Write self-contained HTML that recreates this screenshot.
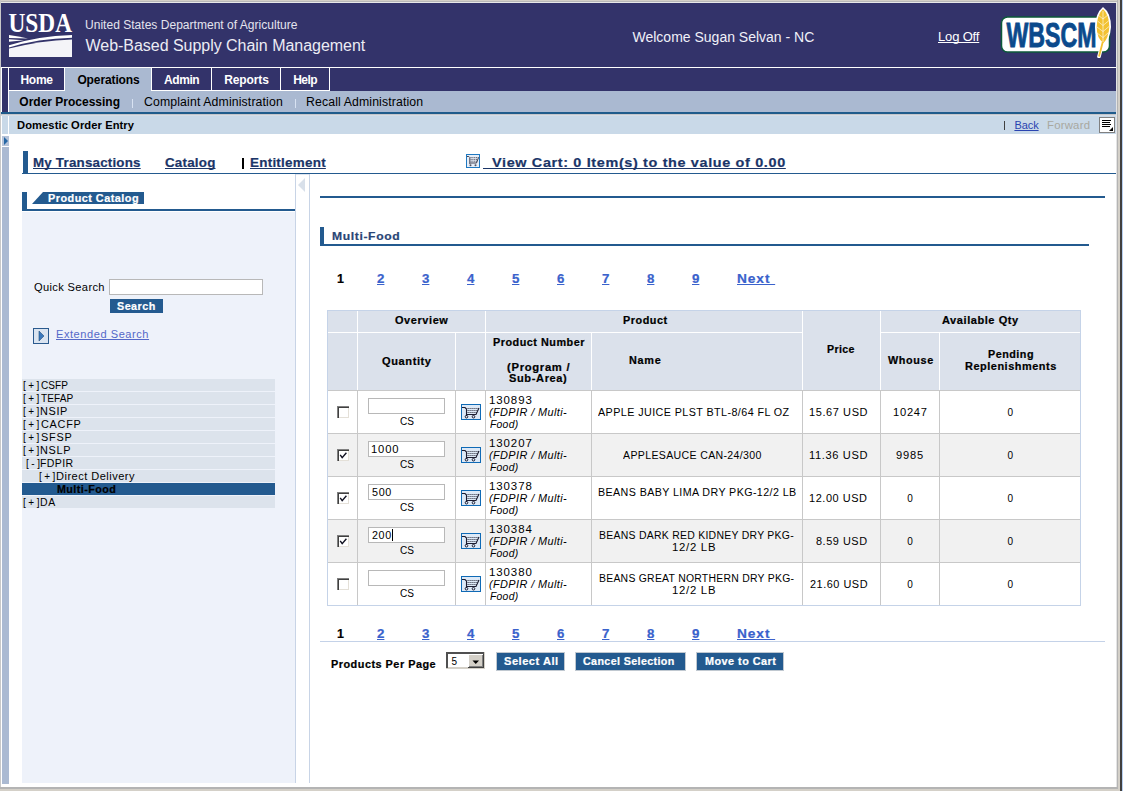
<!DOCTYPE html>
<html><head><meta charset="utf-8"><style>
html,body{margin:0;padding:0;}
body{width:1123px;height:791px;position:relative;overflow:hidden;font-family:"Liberation Sans",sans-serif;}
body>div{position:absolute;box-sizing:content-box;}
.t{white-space:pre;line-height:normal;text-decoration-skip-ink:none;}
</style></head><body>
<div style='left:0px;top:0px;width:1123px;height:791px;background:#d4d0c8;'></div>
<div style='left:0px;top:1px;width:1117px;height:1px;background:#b8b8b8;'></div>
<div style='left:0px;top:2px;width:1117px;height:1px;background:#e8e8e8;'></div>
<div style='left:0px;top:0px;width:1px;height:789px;background:#c8c8c8;'></div>
<div style='left:1px;top:3px;width:1115px;height:784px;background:#ffffff;'></div>
<div style='left:1116px;top:3px;width:1px;height:784px;background:#e4e4e4;'></div>
<div style='left:1117px;top:0px;width:1px;height:789px;background:#b4b4b4;'></div>
<div style='left:1120px;top:0px;width:2px;height:791px;background:#404040;'></div>
<div style='left:1122px;top:0px;width:1px;height:791px;background:#b8d0f0;'></div>
<div style='left:0px;top:787px;width:1118px;height:2px;background:#b4b4b4;'></div>
<div style='left:1px;top:3px;width:1115px;height:64px;background:#33336a;'></div>
<div style='left:1px;top:67px;width:1115px;height:1px;background:#fff;'></div>
<div style='left:2px;top:68px;width:6px;height:44px;background:#33336a;'></div>
<div style='left:9px;top:68px;width:1107px;height:23px;background:#33336a;'></div>
<div style='left:64px;top:68px;width:1px;height:23px;background:#fff;'></div>
<div style='left:9px;top:90px;width:56px;height:1px;background:#fff;'></div>
<div style='left:65px;top:68px;width:86px;height:23px;background:#aab9d1;'></div>
<div style='left:151px;top:68px;width:1px;height:23px;background:#fff;'></div>
<div style='left:211px;top:68px;width:1px;height:23px;background:#fff;'></div>
<div style='left:152px;top:90px;width:60px;height:1px;background:#fff;'></div>
<div style='left:280px;top:68px;width:1px;height:23px;background:#fff;'></div>
<div style='left:212px;top:90px;width:69px;height:1px;background:#fff;'></div>
<div style='left:329px;top:68px;width:1px;height:23px;background:#fff;'></div>
<div style='left:281px;top:90px;width:49px;height:1px;background:#fff;'></div>
<div style='left:64px;top:68px;width:1px;height:23px;background:#fff;'></div>
<div style='left:9px;top:91px;width:1107px;height:21px;background:#aab9d1;'></div>
<div style='left:1px;top:112px;width:1115px;height:2px;background:#1f5b8b;'></div>
<div style='left:132px;top:99px;width:1px;height:9px;background:#d8e2f2;'></div>
<div style='left:295px;top:99px;width:1px;height:9px;background:#d8e2f2;'></div>
<div style='left:1px;top:114px;width:1115px;height:1px;background:#c4c6ca;'></div>
<div style='left:1px;top:115px;width:1115px;height:1px;background:#d6dde6;'></div>
<div style='left:2px;top:116px;width:6px;height:18px;background:#c9d9e8;'></div>
<div style='left:9px;top:116px;width:1107px;height:18px;background:#c9d9e8;'></div>
<div style='left:1099px;top:117px;width:14px;height:14px;border:1px solid #808080;background:#fff'></div>
<div style='left:1102px;top:120px;width:9px;height:1px;background:#000;'></div>
<div style='left:1102px;top:122px;width:8px;height:1px;background:#000;'></div>
<div style='left:1102px;top:124px;width:9px;height:1px;background:#000;'></div>
<div style='left:1102px;top:126px;width:8px;height:1px;background:#000;'></div>
<svg style='position:absolute;left:1109px;top:127px' width='5' height='5'><path d='M4 0 L4 4 L0 4 Z' fill='#000'/></svg>
<div style='left:1004px;top:121px;width:1px;height:9px;background:#404040'></div>
<div style='left:2px;top:136px;width:7px;height:10px;background:#b4c2d8;'></div>
<svg style='position:absolute;left:2px;top:136px' width='7' height='10'><path d='M2 1 L6 5 L2 9 Z' fill='#2566a4'/></svg>
<div style='left:2px;top:147px;width:7px;height:637px;background:#abbad2;'></div>
<div style='left:23px;top:151px;width:5px;height:22px;background:#235a8f;'></div>
<div style='left:22px;top:173px;width:1094px;height:1px;background:#235a8f;'></div>
<div style='left:242px;top:158px;width:2px;height:11px;background:#000;'></div>
<div style='left:466px;top:154px;width:12px;height:12px;border:1px solid #1f78c0;background:#e6eef8'></div>
<svg style='position:absolute;left:466px;top:154px' width='14' height='14' viewBox='0 0 14 14'>
<path d='M1 2.5 L2.8 2.5 L3.8 3.5 L3.8 10' stroke='#404050' stroke-width='1' fill='none'/>
<path d='M4.5 3.6 L12.5 3.6 M4.5 5.4 L11.5 5.4 M4.5 7.2 L11 7.2' stroke='#505060' stroke-width='0.9' stroke-dasharray='1.2 0.6' fill='none'/>
<path d='M4.2 9 L10.5 9 L12.6 3.4' stroke='#404050' stroke-width='1' fill='none'/>
<circle cx='4.5' cy='11.2' r='1' fill='#505060'/><circle cx='9.5' cy='11.2' r='1' fill='#505060'/></svg>
<div style='left:483px;top:168px;width:9px;height:1px;background:#1b3568;'></div>
<div style='left:22px;top:192px;width:5px;height:19px;background:#235a8f;'></div>
<div style='left:22px;top:209px;width:273px;height:2px;background:#235a8f;'></div>
<svg style='position:absolute;left:32px;top:192px' width='112' height='12'><path d='M11 0 L112 0 L112 12 L0 12 Z' fill='#235a8f'/></svg>
<div style='left:22px;top:212px;width:273px;height:571px;background:#eef2fa;'></div>
<div style='left:109px;top:279px;width:152px;height:14px;border:1px solid #b8b8b8;background:#fff'></div>
<div style='left:110px;top:299px;width:53px;height:14px;background:#235a8f;'></div>
<div style='left:33px;top:328px;width:14px;height:14px;border:1px solid #2a5a8e;background:#dae4f0'></div>
<svg style='position:absolute;left:33px;top:328px' width='16' height='16'><path d='M6 3 L11 8 L6 13 Z' fill='#3a78bc' stroke='#23507e' stroke-width='0.6'/></svg>
<div style='left:22px;top:379px;width:253px;height:12px;background:#dce3ec;'></div>
<div style='left:22px;top:392px;width:253px;height:12px;background:#dce3ec;'></div>
<div style='left:22px;top:405px;width:253px;height:12px;background:#dce3ec;'></div>
<div style='left:22px;top:418px;width:253px;height:12px;background:#dce3ec;'></div>
<div style='left:22px;top:431px;width:253px;height:12px;background:#dce3ec;'></div>
<div style='left:22px;top:444px;width:253px;height:12px;background:#dce3ec;'></div>
<div style='left:22px;top:457px;width:253px;height:12px;background:#dce3ec;'></div>
<div style='left:22px;top:470px;width:253px;height:12px;background:#dce3ec;'></div>
<div style='left:22px;top:483px;width:253px;height:12px;background:#235a8f;'></div>
<div style='left:22px;top:496px;width:253px;height:12px;background:#dce3ec;'></div>
<div style='left:295px;top:174px;width:1px;height:609px;background:#c8d4e6;'></div>
<div style='left:309px;top:174px;width:1px;height:609px;background:#c8d4e6;'></div>
<div style='left:296px;top:174px;width:13px;height:1px;background:#dfe6f0;'></div>
<svg style='position:absolute;left:298px;top:178px' width='8' height='15'><path d='M7 0 L7 14 L0 7 Z' fill='#d8e0ea'/></svg>
<div style='left:320px;top:196px;width:785px;height:2px;background:#235a8f;'></div>
<div style='left:320px;top:227px;width:4px;height:19px;background:#235a8f;'></div>
<div style='left:320px;top:244px;width:769px;height:2px;background:#235a8f;'></div>
<div style='left:320px;top:641px;width:785px;height:1px;background:#c4d2e8;'></div>
<div style='left:327px;top:310px;width:754px;height:296px;background:#c5d3e8;'></div>
<div style='left:328px;top:311px;width:752px;height:79px;background:#dbe1eb;'></div>
<div style='left:328px;top:332px;width:474px;height:1px;background:#fff;'></div>
<div style='left:881px;top:332px;width:199px;height:1px;background:#fff;'></div>
<div style='left:357px;top:311px;width:1px;height:79px;background:#fff;'></div>
<div style='left:485px;top:311px;width:1px;height:79px;background:#fff;'></div>
<div style='left:802px;top:311px;width:1px;height:79px;background:#fff;'></div>
<div style='left:880px;top:311px;width:1px;height:79px;background:#fff;'></div>
<div style='left:455px;top:333px;width:1px;height:57px;background:#fff;'></div>
<div style='left:591px;top:333px;width:1px;height:57px;background:#fff;'></div>
<div style='left:939px;top:333px;width:1px;height:57px;background:#fff;'></div>
<div style='left:328px;top:390px;width:752px;height:1px;background:#c8c8c8;'></div>
<div style='left:328px;top:391px;width:752px;height:42px;background:#ffffff;'></div>
<div style='left:328px;top:433px;width:752px;height:1px;background:#c8c8c8;'></div>
<div style='left:328px;top:434px;width:752px;height:42px;background:#f1f1f1;'></div>
<div style='left:328px;top:476px;width:752px;height:1px;background:#c8c8c8;'></div>
<div style='left:328px;top:477px;width:752px;height:42px;background:#ffffff;'></div>
<div style='left:328px;top:519px;width:752px;height:1px;background:#c8c8c8;'></div>
<div style='left:328px;top:520px;width:752px;height:42px;background:#f1f1f1;'></div>
<div style='left:328px;top:562px;width:752px;height:1px;background:#c8c8c8;'></div>
<div style='left:328px;top:563px;width:752px;height:42px;background:#ffffff;'></div>
<div style='left:357px;top:390px;width:1px;height:215px;background:#c8c8c8;'></div>
<div style='left:455px;top:390px;width:1px;height:215px;background:#c8c8c8;'></div>
<div style='left:485px;top:390px;width:1px;height:215px;background:#c8c8c8;'></div>
<div style='left:591px;top:390px;width:1px;height:215px;background:#c8c8c8;'></div>
<div style='left:802px;top:390px;width:1px;height:215px;background:#c8c8c8;'></div>
<div style='left:880px;top:390px;width:1px;height:215px;background:#c8c8c8;'></div>
<div style='left:939px;top:390px;width:1px;height:215px;background:#c8c8c8;'></div>
<div style='left:328px;top:605px;width:752px;height:1px;background:#c5d3e8;'></div>
<div style='left:337px;top:406px;width:12px;height:12px;background:#fff;box-shadow:inset 1px 1px 0 #808080, inset 2px 2px 0 #404040, inset -1px -1px 0 #e4e0d8'></div>
<div style='left:368px;top:398px;width:75px;height:14px;border:1px solid #b8b8b8;background:#fff'></div>
<svg style='position:absolute;left:461px;top:404px' width='20' height='16' viewBox='0 0 20 16'>
<rect x='0.5' y='0.5' width='19' height='15' fill='#dde9f7' stroke='#0f6ab6' stroke-width='1'/>
<path d='M1 3.5 L4 3.5 L5.5 5 L5.5 12' stroke='#1c1c30' stroke-width='1.1' fill='none'/>
<path d='M6.5 4.5 L18 4.5 M6.5 6.5 L17 6.5 M6.5 8.5 L16 8.5' stroke='#303040' stroke-width='0.9' stroke-dasharray='1.2 0.8' fill='none'/>
<path d='M6 10.5 L15 10.5 L18 4' stroke='#1c1c30' stroke-width='1.1' fill='none'/>
<circle cx='5.5' cy='12.7' r='1.3' fill='none' stroke='#1c1c30' stroke-width='1'/><circle cx='12.5' cy='12.7' r='1.3' fill='none' stroke='#1c1c30' stroke-width='1'/></svg>
<div style='left:337px;top:449px;width:12px;height:12px;background:#fff;box-shadow:inset 1px 1px 0 #808080, inset 2px 2px 0 #404040, inset -1px -1px 0 #e4e0d8'></div>
<svg style='position:absolute;left:337px;top:449px' width='12' height='12'><path d='M3.2 5.8 L5.2 8.6 L9.4 3.8' stroke='#101020' stroke-width='1.4' fill='none'/></svg>
<div style='left:368px;top:441px;width:75px;height:14px;border:1px solid #b8b8b8;background:#fff'></div>
<svg style='position:absolute;left:461px;top:447px' width='20' height='16' viewBox='0 0 20 16'>
<rect x='0.5' y='0.5' width='19' height='15' fill='#dde9f7' stroke='#0f6ab6' stroke-width='1'/>
<path d='M1 3.5 L4 3.5 L5.5 5 L5.5 12' stroke='#1c1c30' stroke-width='1.1' fill='none'/>
<path d='M6.5 4.5 L18 4.5 M6.5 6.5 L17 6.5 M6.5 8.5 L16 8.5' stroke='#303040' stroke-width='0.9' stroke-dasharray='1.2 0.8' fill='none'/>
<path d='M6 10.5 L15 10.5 L18 4' stroke='#1c1c30' stroke-width='1.1' fill='none'/>
<circle cx='5.5' cy='12.7' r='1.3' fill='none' stroke='#1c1c30' stroke-width='1'/><circle cx='12.5' cy='12.7' r='1.3' fill='none' stroke='#1c1c30' stroke-width='1'/></svg>
<div style='left:337px;top:492px;width:12px;height:12px;background:#fff;box-shadow:inset 1px 1px 0 #808080, inset 2px 2px 0 #404040, inset -1px -1px 0 #e4e0d8'></div>
<svg style='position:absolute;left:337px;top:492px' width='12' height='12'><path d='M3.2 5.8 L5.2 8.6 L9.4 3.8' stroke='#101020' stroke-width='1.4' fill='none'/></svg>
<div style='left:368px;top:484px;width:75px;height:14px;border:1px solid #b8b8b8;background:#fff'></div>
<svg style='position:absolute;left:461px;top:490px' width='20' height='16' viewBox='0 0 20 16'>
<rect x='0.5' y='0.5' width='19' height='15' fill='#dde9f7' stroke='#0f6ab6' stroke-width='1'/>
<path d='M1 3.5 L4 3.5 L5.5 5 L5.5 12' stroke='#1c1c30' stroke-width='1.1' fill='none'/>
<path d='M6.5 4.5 L18 4.5 M6.5 6.5 L17 6.5 M6.5 8.5 L16 8.5' stroke='#303040' stroke-width='0.9' stroke-dasharray='1.2 0.8' fill='none'/>
<path d='M6 10.5 L15 10.5 L18 4' stroke='#1c1c30' stroke-width='1.1' fill='none'/>
<circle cx='5.5' cy='12.7' r='1.3' fill='none' stroke='#1c1c30' stroke-width='1'/><circle cx='12.5' cy='12.7' r='1.3' fill='none' stroke='#1c1c30' stroke-width='1'/></svg>
<div style='left:337px;top:535px;width:12px;height:12px;background:#fff;box-shadow:inset 1px 1px 0 #808080, inset 2px 2px 0 #404040, inset -1px -1px 0 #e4e0d8'></div>
<svg style='position:absolute;left:337px;top:535px' width='12' height='12'><path d='M3.2 5.8 L5.2 8.6 L9.4 3.8' stroke='#101020' stroke-width='1.4' fill='none'/></svg>
<div style='left:368px;top:527px;width:75px;height:14px;border:1px solid #b8b8b8;background:#fff'></div>
<svg style='position:absolute;left:461px;top:533px' width='20' height='16' viewBox='0 0 20 16'>
<rect x='0.5' y='0.5' width='19' height='15' fill='#dde9f7' stroke='#0f6ab6' stroke-width='1'/>
<path d='M1 3.5 L4 3.5 L5.5 5 L5.5 12' stroke='#1c1c30' stroke-width='1.1' fill='none'/>
<path d='M6.5 4.5 L18 4.5 M6.5 6.5 L17 6.5 M6.5 8.5 L16 8.5' stroke='#303040' stroke-width='0.9' stroke-dasharray='1.2 0.8' fill='none'/>
<path d='M6 10.5 L15 10.5 L18 4' stroke='#1c1c30' stroke-width='1.1' fill='none'/>
<circle cx='5.5' cy='12.7' r='1.3' fill='none' stroke='#1c1c30' stroke-width='1'/><circle cx='12.5' cy='12.7' r='1.3' fill='none' stroke='#1c1c30' stroke-width='1'/></svg>
<div style='left:337px;top:578px;width:12px;height:12px;background:#fff;box-shadow:inset 1px 1px 0 #808080, inset 2px 2px 0 #404040, inset -1px -1px 0 #e4e0d8'></div>
<div style='left:368px;top:570px;width:75px;height:14px;border:1px solid #b8b8b8;background:#fff'></div>
<svg style='position:absolute;left:461px;top:576px' width='20' height='16' viewBox='0 0 20 16'>
<rect x='0.5' y='0.5' width='19' height='15' fill='#dde9f7' stroke='#0f6ab6' stroke-width='1'/>
<path d='M1 3.5 L4 3.5 L5.5 5 L5.5 12' stroke='#1c1c30' stroke-width='1.1' fill='none'/>
<path d='M6.5 4.5 L18 4.5 M6.5 6.5 L17 6.5 M6.5 8.5 L16 8.5' stroke='#303040' stroke-width='0.9' stroke-dasharray='1.2 0.8' fill='none'/>
<path d='M6 10.5 L15 10.5 L18 4' stroke='#1c1c30' stroke-width='1.1' fill='none'/>
<circle cx='5.5' cy='12.7' r='1.3' fill='none' stroke='#1c1c30' stroke-width='1'/><circle cx='12.5' cy='12.7' r='1.3' fill='none' stroke='#1c1c30' stroke-width='1'/></svg>
<div style='left:392px;top:529px;width:1px;height:12px;background:#000;'></div>
<div style='left:446px;top:652px;width:39px;height:17px;background:#d4d0c8;'></div>
<div style='left:446px;top:652px;width:38px;height:2px;background:#505050;'></div>
<div style='left:446px;top:652px;width:2px;height:16px;background:#505050;'></div>
<div style='left:448px;top:654px;width:20px;height:13px;background:#fff;'></div>
<div style='left:468px;top:654px;width:16px;height:14px;background:#404040;'></div>
<div style='left:468px;top:654px;width:15px;height:13px;background:#fff;'></div>
<div style='left:469px;top:655px;width:14px;height:12px;background:#808080;'></div>
<div style='left:469px;top:655px;width:13px;height:11px;background:#d4d0c8;'></div>
<svg style='position:absolute;left:472px;top:660px' width='8' height='5'><path d='M0.5 0.5 L7 0.5 L3.75 4 Z' fill='#000'/></svg>
<div style='left:496px;top:652px;width:67px;height:17px;border:1px solid #c0c8d0;background:#235a8f'></div>
<div style='left:575px;top:652px;width:109px;height:17px;border:1px solid #c0c8d0;background:#235a8f'></div>
<div style='left:696px;top:652px;width:86px;height:17px;border:1px solid #c0c8d0;background:#235a8f'></div>
<svg style='position:absolute;left:8px;top:12px' width='66' height='47' viewBox='0 0 66 47'>
<text x='0.5' y='20' font-family='Liberation Serif' font-weight='700' font-size='27' fill='#fff' textLength='63.5' lengthAdjust='spacingAndGlyphs'>USDA</text>
<path d='M1 23 L1 26 L20 26.5 Q10 24 1 23 Z' fill='#fff'/>
<path d='M1 27.2 L1 29.8 L16 28.2 Z' fill='#fff'/>
<path d='M1 33.2 Q30 24 64 23 L64 25.8 Q30 26.5 1 35.6 Z' fill='#fff'/>
<path d='M1 36.6 Q32 28.5 64 27.4 L64 45 L1 45 Z' fill='#f4f4f8'/>
</svg>
<svg style='position:absolute;left:1000px;top:6px' width='116' height='52' viewBox='0 0 116 52'>
<rect x='1.5' y='11' width='108' height='35' rx='6' fill='#fff' stroke='#0c5a3a' stroke-width='1.5'/>
<text x='6.5' y='41' font-family='Liberation Sans' font-weight='700' font-size='35' fill='#0b4a8c' stroke='#0b4a8c' stroke-width='0.9' textLength='90' lengthAdjust='spacingAndGlyphs'>WBSCM</text>
<path d='M99 50.5 Q101 43 103.5 33' stroke='#fff' stroke-width='3.6' fill='none' stroke-linecap='round'/>
<path d='M103 1 Q111 7 111 21 Q110 34 103.5 39 Q95 34 95 21 Q95.5 7 103 1 Z' fill='#fff'/>
<path d='M99 50.5 Q101 43 103.5 33' stroke='#f2c232' stroke-width='1.8' fill='none'/>
<path d='M103 3 Q109.3 8.5 109.3 21 Q108.5 32.5 103.5 37 Q96.7 32.5 96.7 21 Q97 8.5 103 3 Z' fill='#f2c232'/>
<path d='M98 9 L103 13 L108.5 8.5 M97.5 15 L103 19.5 L109 14.5 M97 21 L103 25.5 L109 20.5 M97 27 L103 31.5 L108.5 26.5 M103 5 L103 36' stroke='#fff' stroke-width='0.7' fill='none' opacity='0.85'/>
</svg>
<div class='t' style='left:84.5px;top:18.0px;font-size:12px;font-weight:400;color:#e4e4ee;letter-spacing:0.013126640830103762px;transform:scaleX(1.0024);transform-origin:0 0;'>United States Department of Agriculture</div>
<div class='t' style='left:85.5px;top:36.7px;font-size:16px;font-weight:400;color:#ececf4;letter-spacing:-0.03125px;'>Web-Based Supply Chain Management</div>
<div class='t' style='left:632.5px;top:29.0px;font-size:14px;font-weight:400;color:#f0f0f8;letter-spacing:0.0px;'>Welcome Sugan Selvan - NC</div>
<div class='t' style='left:938.0px;top:29.0px;font-size:13px;font-weight:400;color:#ffffff;letter-spacing:-0.16666666666666666px;text-decoration:underline;'>Log Off</div>
<div class='t' style='left:20.4px;top:72.8px;font-size:12px;font-weight:700;color:#fff;letter-spacing:-0.23333333333333428px;'>Home</div>
<div class='t' style='left:77.4px;top:72.8px;font-size:12px;font-weight:700;color:#000;letter-spacing:-0.1111111111111111px;'>Operations</div>
<div class='t' style='left:164.0px;top:72.6px;font-size:12px;font-weight:700;color:#fff;letter-spacing:-0.4250000000000007px;'>Admin</div>
<div class='t' style='left:224.2px;top:72.6px;font-size:12px;font-weight:700;color:#fff;letter-spacing:-0.10000000000000024px;'>Reports</div>
<div class='t' style='left:293.2px;top:72.6px;font-size:12px;font-weight:700;color:#fff;letter-spacing:-0.5px;'>Help</div>
<div class='t' style='left:19.3px;top:95.0px;font-size:12px;font-weight:700;color:#000;letter-spacing:0.0px;'>Order Processing</div>
<div class='t' style='left:144.4px;top:95.1px;font-size:12px;font-weight:400;color:#000;letter-spacing:0.12753623188405797px;transform:scaleX(1.0227);transform-origin:0 0;'>Complaint Administration</div>
<div class='t' style='left:306.18px;top:95.1px;font-size:12px;font-weight:400;color:#000;letter-spacing:0.1222466960352423px;transform:scaleX(1.0225);transform-origin:0 0;'>Recall Administration</div>
<div class='t' style='left:17.3px;top:118.9px;font-size:11px;font-weight:700;color:#000;letter-spacing:0.08560311284046723px;transform:scaleX(1.0145);transform-origin:0 0;'>Domestic Order Entry</div>
<div class='t' style='left:1014.4px;top:118.8px;font-size:11px;font-weight:400;color:#2a44b0;letter-spacing:-0.06666666666666643px;text-decoration:underline;'>Back</div>
<div class='t' style='left:1046.97px;top:118.8px;font-size:11px;font-weight:400;color:#a8a8a0;letter-spacing:0.2096774193548394px;transform:scaleX(1.0333);transform-origin:0 0;'>Forward</div>
<div class='t' style='left:33.37px;top:154.8px;font-size:13px;font-weight:700;color:#1b3568;letter-spacing:0.19460500963391217px;-webkit-text-stroke:0.2px #1b3568;text-decoration:underline;transform:scaleX(1.0277);transform-origin:0 0;'>My Transactions</div>
<div class='t' style='left:165.2px;top:154.8px;font-size:13px;font-weight:700;color:#1b3568;letter-spacing:0.21083505866114632px;-webkit-text-stroke:0.2px #1b3568;text-decoration:underline;transform:scaleX(1.0277);transform-origin:0 0;'>Catalog</div>
<div class='t' style='left:250.17px;top:154.8px;font-size:13px;font-weight:700;color:#1b3568;letter-spacing:0.2320441988950282px;-webkit-text-stroke:0.2px #1b3568;text-decoration:underline;transform:scaleX(1.0343);transform-origin:0 0;'>Entitlement</div>
<div class='t' style='left:491.5px;top:154.8px;font-size:13px;font-weight:700;color:#1b3568;letter-spacing:0.5877223366410788px;-webkit-text-stroke:0.2px #1b3568;text-decoration:underline;transform:scaleX(1.1081);transform-origin:0 0;'>View Cart: 0 Item(s) to the value of 0.00</div>
<div class='t' style='left:47.7px;top:193.0px;font-size:10px;font-weight:700;color:#fff;letter-spacing:0.43723849372384876px;-webkit-text-stroke:0.2px #fff;transform:scaleX(1.0864);transform-origin:0 0;'>Product Catalog</div>
<div class='t' style='left:33.5px;top:280.9px;font-size:10.5px;font-weight:400;color:#000;letter-spacing:0.32175689479060265px;transform:scaleX(1.0595);transform-origin:0 0;'>Quick Search</div>
<div class='t' style='left:117.4px;top:300.8px;font-size:10px;font-weight:700;color:#fff;letter-spacing:0.45613540197461133px;-webkit-text-stroke:0.2px #fff;transform:scaleX(1.0742);transform-origin:0 0;'>Search</div>
<div class='t' style='left:56.4px;top:328.5px;font-size:10px;font-weight:400;color:#5468c8;letter-spacing:0.5082204617088343px;text-decoration:underline;transform:scaleX(1.1033);transform-origin:0 0;'>Extended Search</div>
<div class='t' style='left:22.9px;top:379.8px;font-size:10px;font-weight:400;color:#000;letter-spacing:2.5500000000000007px;'>[+]</div>
<div class='t' style='left:40.8px;top:379.8px;font-size:10px;font-weight:400;color:#000;letter-spacing:0.049723756906076874px;transform:scaleX(1.0056);transform-origin:0 0;'>CSFP</div>
<div class='t' style='left:22.9px;top:392.8px;font-size:10px;font-weight:400;color:#000;letter-spacing:2.5500000000000007px;'>[+]</div>
<div class='t' style='left:40.6px;top:392.8px;font-size:10px;font-weight:400;color:#000;letter-spacing:0.07430340557275648px;transform:scaleX(1.0094);transform-origin:0 0;'>TEFAP</div>
<div class='t' style='left:22.9px;top:405.8px;font-size:10px;font-weight:400;color:#000;letter-spacing:2.5500000000000007px;'>[+]</div>
<div class='t' style='left:40.01px;top:405.8px;font-size:10px;font-weight:400;color:#000;letter-spacing:0.5916197623514704px;transform:scaleX(1.0878);transform-origin:0 0;'>NSIP</div>
<div class='t' style='left:22.9px;top:418.8px;font-size:10px;font-weight:400;color:#000;letter-spacing:2.5500000000000007px;'>[+]</div>
<div class='t' style='left:40.8px;top:418.8px;font-size:10px;font-weight:400;color:#000;letter-spacing:0.6857410881801138px;transform:scaleX(1.0878);transform-origin:0 0;'>CACFP</div>
<div class='t' style='left:22.9px;top:431.8px;font-size:10px;font-weight:400;color:#000;letter-spacing:2.5500000000000007px;'>[+]</div>
<div class='t' style='left:40.8px;top:431.8px;font-size:10px;font-weight:400;color:#000;letter-spacing:0.6991869918699205px;transform:scaleX(1.0878);transform-origin:0 0;'>SFSP</div>
<div class='t' style='left:22.9px;top:444.8px;font-size:10px;font-weight:400;color:#000;letter-spacing:2.5500000000000007px;'>[+]</div>
<div class='t' style='left:40.01px;top:444.8px;font-size:10px;font-weight:400;color:#000;letter-spacing:0.6722951844903082px;transform:scaleX(1.0878);transform-origin:0 0;'>NSLP</div>
<div class='t' style='left:25.9px;top:457.8px;font-size:10px;font-weight:400;color:#000;letter-spacing:2.5999999999999996px;'>[-]</div>
<div class='t' style='left:39.85px;top:457.8px;font-size:10px;font-weight:400;color:#000;letter-spacing:0.35655737704918034px;transform:scaleX(1.0517);transform-origin:0 0;'>FDPIR</div>
<div class='t' style='left:39.1px;top:470.8px;font-size:10px;font-weight:400;color:#000;letter-spacing:2.3499999999999996px;'>[+]</div>
<div class='t' style='left:55.8px;top:470.8px;font-size:10px;font-weight:400;color:#000;letter-spacing:0.4332188320872905px;transform:scaleX(1.1047);transform-origin:0 0;'>Direct Delivery</div>
<div class='t' style='left:56.5px;top:483.8px;font-size:10px;font-weight:700;color:#000;letter-spacing:0.39294403892944px;-webkit-text-stroke:0.2px #000;transform:scaleX(1.0745);transform-origin:0 0;'>Multi-Food</div>
<div class='t' style='left:23.1px;top:496.8px;font-size:10px;font-weight:400;color:#000;letter-spacing:2.5px;'>[+]</div>
<div class='t' style='left:39.85px;top:496.8px;font-size:10px;font-weight:400;color:#000;letter-spacing:0.5735294117647073px;transform:scaleX(1.0462);transform-origin:0 0;'>DA</div>
<div class='t' style='left:332.0px;top:230.0px;font-size:11px;font-weight:700;color:#2a4676;letter-spacing:0.5748244192328473px;-webkit-text-stroke:0.2px #2a4676;transform:scaleX(1.1018);transform-origin:0 0;'>Multi-Food</div>
<div class='t' style='left:337.0px;top:272.0px;font-size:12px;font-weight:700;color:#000;letter-spacing:0.0px;-webkit-text-stroke:0.2px #000;transform:scaleX(1.0357);transform-origin:0 0;'>1</div>
<div class='t' style='left:377.3px;top:272.0px;font-size:12px;font-weight:700;color:#3a62cc;letter-spacing:0.0px;-webkit-text-stroke:0.2px #3a62cc;text-decoration:underline;transform:scaleX(1.1071);transform-origin:0 0;'>2</div>
<div class='t' style='left:422.0px;top:272.0px;font-size:12px;font-weight:700;color:#3a62cc;letter-spacing:0.0px;-webkit-text-stroke:0.2px #3a62cc;text-decoration:underline;transform:scaleX(1.1071);transform-origin:0 0;'>3</div>
<div class='t' style='left:467.0px;top:272.0px;font-size:12px;font-weight:700;color:#3a62cc;letter-spacing:0.0px;-webkit-text-stroke:0.2px #3a62cc;text-decoration:underline;transform:scaleX(1.1071);transform-origin:0 0;'>4</div>
<div class='t' style='left:512.2px;top:272.0px;font-size:12px;font-weight:700;color:#3a62cc;letter-spacing:0.0px;-webkit-text-stroke:0.2px #3a62cc;text-decoration:underline;transform:scaleX(1.1071);transform-origin:0 0;'>5</div>
<div class='t' style='left:556.8px;top:272.0px;font-size:12px;font-weight:700;color:#3a62cc;letter-spacing:0.0px;-webkit-text-stroke:0.2px #3a62cc;text-decoration:underline;transform:scaleX(1.1071);transform-origin:0 0;'>6</div>
<div class='t' style='left:602.2px;top:272.0px;font-size:12px;font-weight:700;color:#3a62cc;letter-spacing:0.0px;-webkit-text-stroke:0.2px #3a62cc;text-decoration:underline;transform:scaleX(1.1071);transform-origin:0 0;'>7</div>
<div class='t' style='left:647.0px;top:272.0px;font-size:12px;font-weight:700;color:#3a62cc;letter-spacing:0.0px;-webkit-text-stroke:0.2px #3a62cc;text-decoration:underline;transform:scaleX(1.1071);transform-origin:0 0;'>8</div>
<div class='t' style='left:692.2px;top:272.0px;font-size:12px;font-weight:700;color:#3a62cc;letter-spacing:0.0px;-webkit-text-stroke:0.2px #3a62cc;text-decoration:underline;transform:scaleX(1.1071);transform-origin:0 0;'>9</div>
<div class='t' style='left:737.1px;top:272.0px;font-size:12px;font-weight:700;color:#3a62cc;letter-spacing:0.8097643097643097px;-webkit-text-stroke:0.2px #3a62cc;text-decoration:underline;transform:scaleX(1.1423);transform-origin:0 0;'>Next </div>
<div class='t' style='left:337.0px;top:627.0px;font-size:12px;font-weight:700;color:#000;letter-spacing:0.0px;-webkit-text-stroke:0.2px #000;transform:scaleX(1.0357);transform-origin:0 0;'>1</div>
<div class='t' style='left:377.3px;top:627.0px;font-size:12px;font-weight:700;color:#3a62cc;letter-spacing:0.0px;-webkit-text-stroke:0.2px #3a62cc;text-decoration:underline;transform:scaleX(1.1071);transform-origin:0 0;'>2</div>
<div class='t' style='left:422.0px;top:627.0px;font-size:12px;font-weight:700;color:#3a62cc;letter-spacing:0.0px;-webkit-text-stroke:0.2px #3a62cc;text-decoration:underline;transform:scaleX(1.1071);transform-origin:0 0;'>3</div>
<div class='t' style='left:467.0px;top:627.0px;font-size:12px;font-weight:700;color:#3a62cc;letter-spacing:0.0px;-webkit-text-stroke:0.2px #3a62cc;text-decoration:underline;transform:scaleX(1.1071);transform-origin:0 0;'>4</div>
<div class='t' style='left:512.2px;top:627.0px;font-size:12px;font-weight:700;color:#3a62cc;letter-spacing:0.0px;-webkit-text-stroke:0.2px #3a62cc;text-decoration:underline;transform:scaleX(1.1071);transform-origin:0 0;'>5</div>
<div class='t' style='left:556.8px;top:627.0px;font-size:12px;font-weight:700;color:#3a62cc;letter-spacing:0.0px;-webkit-text-stroke:0.2px #3a62cc;text-decoration:underline;transform:scaleX(1.1071);transform-origin:0 0;'>6</div>
<div class='t' style='left:602.2px;top:627.0px;font-size:12px;font-weight:700;color:#3a62cc;letter-spacing:0.0px;-webkit-text-stroke:0.2px #3a62cc;text-decoration:underline;transform:scaleX(1.1071);transform-origin:0 0;'>7</div>
<div class='t' style='left:647.0px;top:627.0px;font-size:12px;font-weight:700;color:#3a62cc;letter-spacing:0.0px;-webkit-text-stroke:0.2px #3a62cc;text-decoration:underline;transform:scaleX(1.1071);transform-origin:0 0;'>8</div>
<div class='t' style='left:692.2px;top:627.0px;font-size:12px;font-weight:700;color:#3a62cc;letter-spacing:0.0px;-webkit-text-stroke:0.2px #3a62cc;text-decoration:underline;transform:scaleX(1.1071);transform-origin:0 0;'>9</div>
<div class='t' style='left:737.1px;top:627.0px;font-size:12px;font-weight:700;color:#3a62cc;letter-spacing:0.8097643097643097px;-webkit-text-stroke:0.2px #3a62cc;text-decoration:underline;transform:scaleX(1.1423);transform-origin:0 0;'>Next </div>
<div class='t' style='left:395.4px;top:315.0px;font-size:10px;font-weight:700;color:#000;letter-spacing:0.5487804878048775px;-webkit-text-stroke:0.2px #000;transform:scaleX(1.0933);transform-origin:0 0;'>Overview</div>
<div class='t' style='left:622.7px;top:314.9px;font-size:10px;font-weight:700;color:#000;letter-spacing:0.4848116646415562px;-webkit-text-stroke:0.2px #000;transform:scaleX(1.0829);transform-origin:0 0;'>Product</div>
<div class='t' style='left:942.4px;top:315.0px;font-size:10px;font-weight:700;color:#000;letter-spacing:0.4978448275862064px;-webkit-text-stroke:0.2px #000;transform:scaleX(1.1048);transform-origin:0 0;'>Available Qty</div>
<div class='t' style='left:382.3px;top:355.7px;font-size:10px;font-weight:700;color:#000;letter-spacing:0.5501183898973965px;-webkit-text-stroke:0.2px #000;transform:scaleX(1.1037);transform-origin:0 0;'>Quantity</div>
<div class='t' style='left:492.7px;top:337.0px;font-size:10px;font-weight:700;color:#000;letter-spacing:0.46526997257564157px;-webkit-text-stroke:0.2px #000;transform:scaleX(1.0829);transform-origin:0 0;'>Product Number</div>
<div class='t' style='left:506.5px;top:361.5px;font-size:10px;font-weight:700;color:#000;letter-spacing:0.6172839506172839px;-webkit-text-stroke:0.2px #000;transform:scaleX(1.1250);transform-origin:0 0;'>(Program /</div>
<div class='t' style='left:509.0px;top:373.0px;font-size:10px;font-weight:700;color:#000;letter-spacing:0.5660377358490575px;-webkit-text-stroke:0.2px #000;transform:scaleX(1.1042);transform-origin:0 0;'>Sub-Area)</div>
<div class='t' style='left:628.5px;top:355.3px;font-size:10px;font-weight:700;color:#000;letter-spacing:0.6923076923076922px;-webkit-text-stroke:0.2px #000;transform:scaleX(1.0833);transform-origin:0 0;'>Name</div>
<div class='t' style='left:827.4px;top:344.0px;font-size:10px;font-weight:700;color:#000;letter-spacing:0.3648775894538608px;-webkit-text-stroke:0.2px #000;transform:scaleX(1.0620);transform-origin:0 0;'>Price</div>
<div class='t' style='left:887.6px;top:355.0px;font-size:10px;font-weight:700;color:#000;letter-spacing:0.5914691943127954px;-webkit-text-stroke:0.2px #000;transform:scaleX(1.0821);transform-origin:0 0;'>Whouse</div>
<div class='t' style='left:987.8px;top:349.3px;font-size:10px;font-weight:700;color:#000;letter-spacing:0.46428571428571325px;-webkit-text-stroke:0.2px #000;transform:scaleX(1.0769);transform-origin:0 0;'>Pending</div>
<div class='t' style='left:965.0px;top:361.0px;font-size:10px;font-weight:700;color:#000;letter-spacing:0.4935897435897436px;-webkit-text-stroke:0.2px #000;transform:scaleX(1.0909);transform-origin:0 0;'>Replenishments</div>
<div class='t' style='left:488.56px;top:394.9px;font-size:10px;font-weight:400;color:#000;letter-spacing:0.8043715846994538px;transform:scaleX(1.1438);transform-origin:0 0;'>130893</div>
<div class='t' style='left:489.4px;top:407.0px;font-size:10px;font-weight:400;color:#000;letter-spacing:0.3808197373656982px;font-style:italic;transform:scaleX(1.0879);transform-origin:0 0;'>(FDPIR / Multi-</div>
<div class='t' style='left:489.5px;top:418.6px;font-size:10px;font-weight:400;color:#000;letter-spacing:0.24074074074074162px;font-style:italic;transform:scaleX(1.0385);transform-origin:0 0;'>Food)</div>
<div class='t' style='left:598.0px;top:407.2px;font-size:10px;font-weight:400;color:#000;letter-spacing:0.38748832866480015px;transform:scaleX(1.0753);transform-origin:0 0;'>APPLE JUICE PLST BTL-8/64 FL OZ</div>
<div class='t' style='left:399.6px;top:416.3px;font-size:10px;font-weight:400;color:#000;letter-spacing:0.09929078014184362px;transform:scaleX(1.0071);transform-origin:0 0;'>CS</div>
<div class='t' style='left:809.06px;top:407.2px;font-size:10px;font-weight:400;color:#000;letter-spacing:0.5402843601895726px;transform:scaleX(1.0990);transform-origin:0 0;'>15.67 USD</div>
<div class='t' style='left:893.05px;top:407.2px;font-size:10px;font-weight:400;color:#000;letter-spacing:0.6851081530782023px;transform:scaleX(1.1130);transform-origin:0 0;'>10247</div>
<div class='t' style='left:1007.6px;top:407.2px;font-size:10px;font-weight:400;color:#000;letter-spacing:0.0px;'>0</div>
<div class='t' style='left:488.56px;top:437.9px;font-size:10px;font-weight:400;color:#000;letter-spacing:0.8043715846994538px;transform:scaleX(1.1438);transform-origin:0 0;'>130207</div>
<div class='t' style='left:489.4px;top:450.0px;font-size:10px;font-weight:400;color:#000;letter-spacing:0.3808197373656982px;font-style:italic;transform:scaleX(1.0879);transform-origin:0 0;'>(FDPIR / Multi-</div>
<div class='t' style='left:489.5px;top:461.6px;font-size:10px;font-weight:400;color:#000;letter-spacing:0.24074074074074162px;font-style:italic;transform:scaleX(1.0385);transform-origin:0 0;'>Food)</div>
<div class='t' style='left:623.2px;top:449.9px;font-size:10px;font-weight:400;color:#000;letter-spacing:0.32919666540356135px;transform:scaleX(1.0556);transform-origin:0 0;'>APPLESAUCE CAN-24/300</div>
<div class='t' style='left:399.6px;top:459.3px;font-size:10px;font-weight:400;color:#000;letter-spacing:0.09929078014184362px;transform:scaleX(1.0071);transform-origin:0 0;'>CS</div>
<div class='t' style='left:808.55px;top:450.2px;font-size:10px;font-weight:400;color:#000;letter-spacing:0.5750959692898274px;transform:scaleX(1.1085);transform-origin:0 0;'>11.36 USD</div>
<div class='t' style='left:896.41px;top:450.2px;font-size:10px;font-weight:400;color:#000;letter-spacing:0.734832992501704px;transform:scaleX(1.1114);transform-origin:0 0;'>9985</div>
<div class='t' style='left:1007.6px;top:450.2px;font-size:10px;font-weight:400;color:#000;letter-spacing:0.0px;'>0</div>
<div class='t' style='left:370.68px;top:443.8px;font-size:10px;font-weight:400;color:#000;letter-spacing:0.7579617834394906px;transform:scaleX(1.1214);transform-origin:0 0;'>1000</div>
<div class='t' style='left:488.56px;top:480.9px;font-size:10px;font-weight:400;color:#000;letter-spacing:0.8043715846994538px;transform:scaleX(1.1438);transform-origin:0 0;'>130378</div>
<div class='t' style='left:489.4px;top:493.0px;font-size:10px;font-weight:400;color:#000;letter-spacing:0.3808197373656982px;font-style:italic;transform:scaleX(1.0879);transform-origin:0 0;'>(FDPIR / Multi-</div>
<div class='t' style='left:489.5px;top:504.6px;font-size:10px;font-weight:400;color:#000;letter-spacing:0.24074074074074162px;font-style:italic;transform:scaleX(1.0385);transform-origin:0 0;'>Food)</div>
<div class='t' style='left:597.83px;top:486.5px;font-size:10px;font-weight:400;color:#000;letter-spacing:0.37551112311987794px;transform:scaleX(1.0697);transform-origin:0 0;'>BEANS BABY LIMA DRY PKG-12/2 LB</div>
<div class='t' style='left:399.6px;top:502.3px;font-size:10px;font-weight:400;color:#000;letter-spacing:0.09929078014184362px;transform:scaleX(1.0071);transform-origin:0 0;'>CS</div>
<div class='t' style='left:809.33px;top:493.2px;font-size:10px;font-weight:400;color:#000;letter-spacing:0.5142857142857142px;transform:scaleX(1.0938);transform-origin:0 0;'>12.00 USD</div>
<div class='t' style='left:907.3px;top:493.2px;font-size:10px;font-weight:400;color:#000;letter-spacing:0.0px;'>0</div>
<div class='t' style='left:1007.6px;top:493.2px;font-size:10px;font-weight:400;color:#000;letter-spacing:0.0px;'>0</div>
<div class='t' style='left:371.8px;top:486.8px;font-size:10px;font-weight:400;color:#000;letter-spacing:0.6253405994550416px;transform:scaleX(1.0794);transform-origin:0 0;'>500</div>
<div class='t' style='left:488.56px;top:523.9px;font-size:10px;font-weight:400;color:#000;letter-spacing:0.8043715846994538px;transform:scaleX(1.1438);transform-origin:0 0;'>130384</div>
<div class='t' style='left:489.4px;top:536.0px;font-size:10px;font-weight:400;color:#000;letter-spacing:0.3808197373656982px;font-style:italic;transform:scaleX(1.0879);transform-origin:0 0;'>(FDPIR / Multi-</div>
<div class='t' style='left:489.5px;top:547.6px;font-size:10px;font-weight:400;color:#000;letter-spacing:0.24074074074074162px;font-style:italic;transform:scaleX(1.0385);transform-origin:0 0;'>Food)</div>
<div class='t' style='left:598.66px;top:530.0px;font-size:10px;font-weight:400;color:#000;letter-spacing:0.2592561669125081px;transform:scaleX(1.0441);transform-origin:0 0;'>BEANS DARK RED KIDNEY DRY PKG-</div>
<div class='t' style='left:672.07px;top:541.8px;font-size:10px;font-weight:400;color:#000;letter-spacing:0.6470588235294116px;transform:scaleX(1.1333);transform-origin:0 0;'>12/2 LB</div>
<div class='t' style='left:399.6px;top:545.3px;font-size:10px;font-weight:400;color:#000;letter-spacing:0.09929078014184362px;transform:scaleX(1.0071);transform-origin:0 0;'>CS</div>
<div class='t' style='left:816.15px;top:536.2px;font-size:10px;font-weight:400;color:#000;letter-spacing:0.49877899877899934px;transform:scaleX(1.0884);transform-origin:0 0;'>8.59 USD</div>
<div class='t' style='left:907.3px;top:536.2px;font-size:10px;font-weight:400;color:#000;letter-spacing:0.0px;'>0</div>
<div class='t' style='left:1007.6px;top:536.2px;font-size:10px;font-weight:400;color:#000;letter-spacing:0.0px;'>0</div>
<div class='t' style='left:371.8px;top:529.8px;font-size:10px;font-weight:400;color:#000;letter-spacing:0.5821917808219178px;transform:scaleX(1.0735);transform-origin:0 0;'>200</div>
<div class='t' style='left:488.56px;top:566.9px;font-size:10px;font-weight:400;color:#000;letter-spacing:0.8043715846994538px;transform:scaleX(1.1438);transform-origin:0 0;'>130380</div>
<div class='t' style='left:489.4px;top:579.0px;font-size:10px;font-weight:400;color:#000;letter-spacing:0.3808197373656982px;font-style:italic;transform:scaleX(1.0879);transform-origin:0 0;'>(FDPIR / Multi-</div>
<div class='t' style='left:489.5px;top:590.6px;font-size:10px;font-weight:400;color:#000;letter-spacing:0.24074074074074162px;font-style:italic;transform:scaleX(1.0385);transform-origin:0 0;'>Food)</div>
<div class='t' style='left:598.66px;top:572.8px;font-size:10px;font-weight:400;color:#000;letter-spacing:0.25214649852428306px;transform:scaleX(1.0411);transform-origin:0 0;'>BEANS GREAT NORTHERN DRY PKG-</div>
<div class='t' style='left:672.07px;top:584.5px;font-size:10px;font-weight:400;color:#000;letter-spacing:0.6470588235294116px;transform:scaleX(1.1333);transform-origin:0 0;'>12/2 LB</div>
<div class='t' style='left:399.6px;top:588.3px;font-size:10px;font-weight:400;color:#000;letter-spacing:0.09929078014184362px;transform:scaleX(1.0071);transform-origin:0 0;'>CS</div>
<div class='t' style='left:809.65px;top:579.2px;font-size:10px;font-weight:400;color:#000;letter-spacing:0.49413696060037654px;transform:scaleX(1.0878);transform-origin:0 0;'>21.60 USD</div>
<div class='t' style='left:907.3px;top:579.2px;font-size:10px;font-weight:400;color:#000;letter-spacing:0.0px;'>0</div>
<div class='t' style='left:1007.6px;top:579.2px;font-size:10px;font-weight:400;color:#000;letter-spacing:0.0px;'>0</div>
<div class='t' style='left:330.7px;top:658.6px;font-size:10px;font-weight:700;color:#000;letter-spacing:0.4508582860092933px;-webkit-text-stroke:0.2px #000;transform:scaleX(1.0882);transform-origin:0 0;'>Products Per Page</div>
<div class='t' style='left:451.6px;top:655.9px;font-size:10px;font-weight:400;color:#000;letter-spacing:0.0px;'>5</div>
<div class='t' style='left:503.9px;top:655.6px;font-size:10px;font-weight:700;color:#fff;letter-spacing:0.47182295231576493px;-webkit-text-stroke:0.2px #fff;transform:scaleX(1.1068);transform-origin:0 0;'>Select All</div>
<div class='t' style='left:583.0px;top:655.6px;font-size:10px;font-weight:700;color:#fff;letter-spacing:0.35181942012064554px;-webkit-text-stroke:0.2px #fff;transform:scaleX(1.0706);transform-origin:0 0;'>Cancel Selection</div>
<div class='t' style='left:704.5px;top:655.6px;font-size:10px;font-weight:700;color:#fff;letter-spacing:0.43559461686349926px;-webkit-text-stroke:0.2px #fff;transform:scaleX(1.0852);transform-origin:0 0;'>Move to Cart</div>
</body></html>
